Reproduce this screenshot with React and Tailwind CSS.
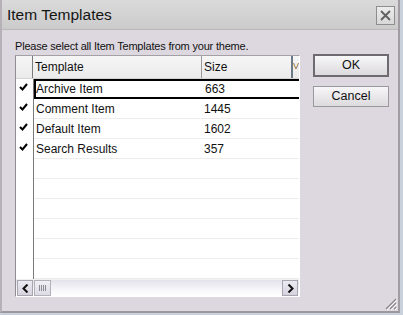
import React from 'react'

const rows = [
  { name: 'Archive Item', size: '663' },
  { name: 'Comment Item', size: '1445' },
  { name: 'Default Item', size: '1602' },
  { name: 'Search Results', size: '357' },
]

const Check = () => (
  <svg width="9" height="8" viewBox="0 0 9 8" className="block">
    <path d="M1 4 L3.5 6.5 L8 1" fill="none" stroke="#000" strokeWidth="2" />
  </svg>
)

const Chevron = ({ dir }) => (
  <svg width="7" height="9" viewBox="0 0 7 9" className="block">
    <path
      d={dir === 'left' ? 'M5.5 0.5 L1.5 4.5 L5.5 8.5' : 'M1.5 0.5 L5.5 4.5 L1.5 8.5'}
      fill="none"
      stroke="#111"
      strokeWidth="2"
    />
  </svg>
)

const App = () => {
  const empty = Array.from({ length: 6 })

  return (
    <div className="w-[403px] h-[315px] bg-[#c9d2dc] overflow-hidden" style={{ fontFamily: '"Liberation Sans", Arial, sans-serif' }}>
      <div className="w-[400px] h-[313px] bg-[#ddd7df] border-l-2 border-r-2 border-b-2 border-l-[#b5b1b7] border-r-[#a09ca2] border-b-[#9c989e] flex flex-col">
        {/* title bar */}
        <div className="h-[30px] flex items-center justify-between pl-[5px] pr-[3px] bg-gradient-to-b from-[#dadada] to-[#cbcbcb] border-b border-[#b9b9b9]">
          <span className="text-[15.5px] text-[#151515]">
            Item Templates
          </span>
          <div className="w-[19px] h-[19px] border border-[#8e8e8e] bg-gradient-to-b from-[#ececec] to-[#d8d8d8] flex items-center justify-center mt-[2px]">
            <svg width="11" height="11" viewBox="0 0 11 11">
              <path d="M1 1 L10 10 M10 1 L1 10" stroke="#5f5f5f" strokeWidth="1.8" />
            </svg>
          </div>
        </div>

        {/* body */}
        <div className="flex flex-1 relative">
          <div className="pl-[13px] pt-[9px] flex flex-col">
            <p className="text-[11px] tracking-[-0.2px] leading-[14px] text-[#111] mb-[2px]">
              Please select all Item Templates from your theme.
            </p>

            {/* grid */}
            <div className="w-[285px] h-[242px] border border-t-[#a3a0a6] border-l-[#8f8c92] border-r-white border-b-white bg-white flex flex-col text-[12px] text-[#111]">
              {/* header */}
              <div className="h-[23px] flex bg-gradient-to-b from-[#f6f6f6] to-[#ebebeb] border-b border-[#d4d4d4]">
                <div className="w-[17px] border-r border-[#7b7b7b]" />
                <div className="w-[169px] border-r border-[#9a9a9a] pl-[2px] flex items-center">Template</div>
                <div className="w-[91px] border-r-2 border-[#6c7a88] pl-[2px] flex items-center">Size</div>
                <div className="flex-1 overflow-hidden flex items-center text-[#8a6a2a] text-[9px]">V</div>
              </div>

              {/* rows */}
              <div className="flex flex-1 min-h-0">
                <div className="w-[18px] border-r border-[#7b7b7b] flex flex-col">
                  {rows.map((r) => (
                    <div key={r.name} className="h-[20px] pl-[3px] pt-[4px]">
                      <Check />
                    </div>
                  ))}
                </div>
                <div className="flex-1 flex flex-col">
                  {rows.map((r, i) => (
                    <div
                      key={r.name}
                      className={
                        i === 0
                          ? 'h-[20px] flex items-center border-t-2 border-b-2 border-l-2 border-black'
                          : 'h-[20px] flex items-center border-b border-[#ececec]'
                      }
                    >
                      <div className={i === 0 ? 'w-[168px]' : 'w-[169px] pl-[2px]'}>{r.name}</div>
                      <div className="pl-[1px]">{r.size}</div>
                    </div>
                  ))}
                  {empty.map((_, i) => (
                    <div key={i} className="h-[20px] border-b border-[#ececec]" />
                  ))}
                </div>
              </div>

              {/* horizontal scrollbar */}
              <div className="h-[17px] flex items-center bg-gradient-to-b from-[#e4e2ea] via-[#f4f3f7] to-white border-t border-[#f0eff3] pl-[1px] pr-[1px]">
                <div className="w-[16px] h-[16px] border border-[#a7a5ae] bg-gradient-to-b from-[#eceaf1] to-[#d6d3de] flex items-center justify-center">
                  <Chevron dir="left" />
                </div>
                <div className="w-[17px] h-[16px] ml-[1px] border border-[#b3b1ba] bg-gradient-to-b from-[#f1f0f5] to-[#dddbe3] flex items-center justify-center gap-[1px]">
                  <span className="w-px h-[6px] bg-[#8c8a94]" />
                  <span className="w-px h-[6px] bg-[#8c8a94]" />
                  <span className="w-px h-[6px] bg-[#8c8a94]" />
                  <span className="w-px h-[6px] bg-[#8c8a94]" />
                </div>
                <div className="flex-1" />
                <div className="w-[16px] h-[16px] border border-[#a7a5ae] bg-gradient-to-b from-[#eceaf1] to-[#d6d3de] flex items-center justify-center">
                  <Chevron dir="right" />
                </div>
              </div>
            </div>
          </div>

          {/* buttons */}
          <div className="ml-[13px] pt-[24px] flex flex-col gap-[9px]">
            <button className="w-[76px] h-[23px] border-2 border-[#6d6b70] bg-gradient-to-b from-[#f7f6f8] to-[#dcdadd] text-[12.5px] text-[#111] flex items-center justify-center">
              OK
            </button>
            <button className="w-[76px] h-[21px] border border-[#9a989c] bg-gradient-to-b from-[#f7f6f8] to-[#dcdadd] text-[12.5px] text-[#111] flex items-center justify-center">
              Cancel
            </button>
          </div>

          {/* resize grip */}
          <svg width="12" height="12" viewBox="0 0 12 12" className="absolute right-[1px] bottom-[1px]">
            <path d="M11 1 L1 11 M11 5 L5 11 M11 9 L9 11" stroke="#8a878c" strokeWidth="1.2" />
            <path d="M12 2 L2 12 M12 6 L6 12 M12 10 L10 12" stroke="#ffffff" strokeWidth="1" />
          </svg>
        </div>
      </div>
    </div>
  )
}

export default App
